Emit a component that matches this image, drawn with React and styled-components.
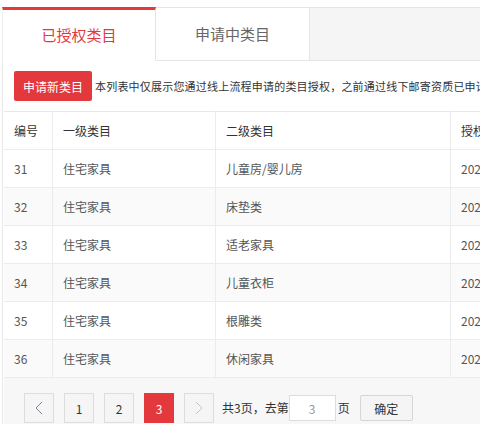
import React from 'react';
import styled, { createGlobalStyle } from 'styled-components';

const Global = createGlobalStyle`
    html, body {
        margin: 0;
        padding: 0;
        background: #fff;
        overflow: hidden;
    }
    body {
        font-family: "Noto Sans CJK SC", "Liberation Sans", sans-serif;
        font-size: 12px;
        color: #333;
    }
`;

const Wrapper = styled.div`
    margin: 7px 0 0 2px;
    width: 1000px;
`;

const TabBar = styled.div`
    display: flex;
    height: 54px;
`;

const Tab = styled.div`
    box-sizing: border-box;
    width: 154px;
    display: flex;
    align-items: center;
    justify-content: center;
    font-size: 15px;
    background: #fff;
    color: ${p => (p.active ? '#e4393c' : '#666')};
    border-top: ${p => (p.active ? '3px solid #e4393c' : '1px solid #e5e5e5')};
    border-left: ${p => (p.first ? '1px solid #eee' : 'none')};
    border-right: 1px solid #e5e5e5;
    border-bottom: 1px solid ${p => (p.active ? '#fff' : '#e5e5e5')};
    padding-bottom: 2px;
    cursor: pointer;
`;

const TabFill = styled.div`
    flex: 1;
    background: #f5f5f5;
    border-top: 1px solid #e5e5e5;
    border-bottom: 1px solid #e5e5e5;
`;

const Panel = styled.div`
    border-left: 1px solid #e8e8e8;
    padding-left: 1px;
    background: #fff;
`;

const Toolbar = styled.div`
    display: flex;
    align-items: center;
    height: 50px;
    padding: 0 10px;
    white-space: nowrap;
`;

const RedButton = styled.button`
    width: 78px;
    height: 30px;
    border: none;
    border-radius: 2px;
    background: #e4393c;
    color: #fff;
    font-family: inherit;
    font-size: 12px;
    padding: 0;
    margin-right: 3px;
    cursor: pointer;
`;

const Note = styled.span`
    font-size: 11px;
    letter-spacing: 0.2px;
    color: #333;
`;

const Table = styled.table`
    border-collapse: collapse;
    width: 996px;
    table-layout: fixed;
    border-top: 1px solid #e8e8e8;
`;

const Th = styled.th`
    height: 37px;
    padding: 0 10px;
    text-align: left;
    font-weight: normal;
    font-size: 12px;
    color: #333;
    border-right: 1px solid #ececec;
    border-bottom: 1px solid #ececec;
    width: ${p => (p.w ? `${p.w - 20}px` : 'auto')};
`;

const Tr = styled.tr`
    background: ${p => (p.odd ? '#fafafa' : '#fff')};
`;

const Td = styled.td`
    height: 37px;
    padding: 0 10px;
    font-size: 12px;
    color: #555;
    border-right: 1px solid #ececec;
    border-bottom: 1px solid #ececec;
    white-space: nowrap;
`;

const Pager = styled.div`
    display: flex;
    align-items: flex-start;
    padding: 15px 20px 20px;
    background: #f7f7f7;
    white-space: nowrap;
`;

const PageBtn = styled.div`
    box-sizing: border-box;
    width: 30px;
    height: 30px;
    margin-right: 10px;
    display: flex;
    align-items: center;
    justify-content: center;
    font-size: 12px;
    border: 1px solid ${p => (p.active ? '#e4393c' : '#ddd')};
    background: ${p => (p.active ? '#e4393c' : '#f5f5f5')};
    color: ${p => (p.active ? '#fff' : '#333')};
    cursor: pointer;
`;

const PagerText = styled.span`
    font-size: 12px;
    color: #333;
    line-height: 30px;
    margin-left: ${p => p.ml || 0}px;
`;

const PageInput = styled.input`
    box-sizing: border-box;
    width: 47px;
    height: 26px;
    margin: 2px 0 0 0;
    border: 1px solid #ddd;
    background: #fff;
    text-align: center;
    font-family: inherit;
    font-size: 12px;
    color: #999;
    padding: 0;
    outline: none;
`;

const GoButton = styled.button`
    box-sizing: border-box;
    width: 53px;
    height: 26px;
    margin: 2px 0 0 10px;
    border: 1px solid #d5d5d5;
    border-radius: 2px;
    background: #f5f5f5;
    font-family: inherit;
    font-size: 12px;
    color: #333;
    padding: 0;
    cursor: pointer;
`;

const Chevron = ({ dir, color }) => (
    <svg width="8" height="14" viewBox="0 0 8 14">
        <polyline
            points={dir === 'left' ? '7,1 1,7 7,13' : '1,1 7,7 1,13'}
            fill="none"
            stroke={color}
            strokeWidth="1"
        />
    </svg>
);

const rows = [
    { id: 31, first: '住宅家具', second: '儿童房/婴儿房', time: '2020-03-18 14:22:05' },
    { id: 32, first: '住宅家具', second: '床垫类', time: '2020-03-18 14:22:05' },
    { id: 33, first: '住宅家具', second: '适老家具', time: '2020-03-18 14:22:05' },
    { id: 34, first: '住宅家具', second: '儿童衣柜', time: '2020-03-18 14:22:05' },
    { id: 35, first: '住宅家具', second: '根雕类', time: '2020-03-18 14:22:05' },
    { id: 36, first: '住宅家具', second: '休闲家具', time: '2020-03-18 14:22:05' },
];

export default function App() {
    return (
        <Wrapper>
            <Global />
            <TabBar>
                <Tab active first>已授权类目</Tab>
                <Tab>申请中类目</Tab>
                <TabFill />
            </TabBar>
            <Panel>
                <Toolbar>
                    <RedButton>申请新类目</RedButton>
                    <Note>本列表中仅展示您通过线上流程申请的类目授权，之前通过线下邮寄资质已申请的类目授权请联系客服查询。</Note>
                </Toolbar>
                <Table>
                    <thead>
                        <tr>
                            <Th w={48}>编号</Th>
                            <Th w={162}>一级类目</Th>
                            <Th w={234}>二级类目</Th>
                            <Th>授权时间</Th>
                        </tr>
                    </thead>
                    <tbody>
                        {rows.map((r, i) => (
                            <Tr key={r.id} odd={i % 2 === 1}>
                                <Td>{r.id}</Td>
                                <Td>{r.first}</Td>
                                <Td>{r.second}</Td>
                                <Td>{r.time}</Td>
                            </Tr>
                        ))}
                    </tbody>
                </Table>
                <Pager>
                    <PageBtn><Chevron dir="left" color="#7a8596" /></PageBtn>
                    <PageBtn>1</PageBtn>
                    <PageBtn>2</PageBtn>
                    <PageBtn active>3</PageBtn>
                    <PageBtn><Chevron dir="right" color="#c4c4c4" /></PageBtn>
                    <PagerText ml={-2}>共3页，去第</PagerText>
                    <PageInput defaultValue="3" />
                    <PagerText ml={2}>页</PagerText>
                    <GoButton>确定</GoButton>
                </Pager>
            </Panel>
        </Wrapper>
    );
}
